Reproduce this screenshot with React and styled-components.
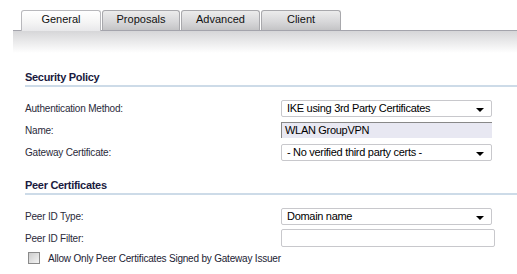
import React from "react";
import styled, { createGlobalStyle } from "styled-components";

const Global = createGlobalStyle`
  html, body { margin: 0; padding: 0; background: #fff; }
  body { width: 517px; height: 274px; overflow: hidden; font-family: "Liberation Sans", Arial, sans-serif; }
`;

const Page = styled.div`
  width: 517px;
  height: 274px;
  background: #fff;
  padding-top: 9px;
  box-sizing: border-box;
`;

const TabBar = styled.div`
  display: flex;
  align-items: flex-end;
  margin-left: 13px;
  padding-left: 8px;
  height: 21px;
  border-bottom: 1px solid #a4a4ac;
`;

const Tab = styled.div`
  width: ${(p) => p.$w}px;
  height: 20px;
  margin-right: 1px;
  box-sizing: border-box;
  border: 1px solid ${(p) => (p.$active ? "#b8b8bc" : "#a8a8ac")};
  border-bottom: none;
  border-radius: 3px 3px 0 0;
  background: ${(p) =>
    p.$active
      ? "linear-gradient(#ffffff, #f4f4f4 60%, #e8e8ea)"
      : "linear-gradient(#ececec, #d6d6d8 60%, #c4c4c6)"};
  font-size: 11px;
  color: #111;
  text-align: center;
  line-height: 17px;
  ${(p) => p.$active && "height: 21px; margin-bottom: -1px;"}
`;

const Band = styled.div`
  margin-left: 13px;
  height: 22px;
  background: linear-gradient(#d6d6d8, #ffffff);
`;

const Content = styled.div`
  padding: 18px 0 0 25px;
  font-size: 10px;
  letter-spacing: -0.2px;
  color: #222233;
`;

const SectionTitle = styled.div`
  font-weight: bold;
  font-size: 11px;
  letter-spacing: -0.3px;
  color: #1a1a40;
  padding-bottom: 2px;
  border-bottom: 2px solid #cddbe8;
  margin-bottom: 10px;
`;

const Row = styled.div`
  display: flex;
  align-items: center;
  height: 22px;
`;

const Label = styled.div`
  width: 256px;
  flex: none;
  color: #2a2a3a;
`;

const SelectBox = styled.div`
  position: relative;
  width: 211px;
  height: 17px;
  box-sizing: border-box;
  border: 1px solid #c8c8cc;
  border-radius: 2px;
  background: #fff;
  font-size: 11px;
  letter-spacing: -0.3px;
  color: #000;
  line-height: 15px;
  padding-left: 5px;
`;

const Arrow = styled.span`
  position: absolute;
  right: 7px;
  top: 7px;
  width: 0;
  height: 0;
  border-left: 4px solid transparent;
  border-right: 4px solid transparent;
  border-top: 4px solid #000;
`;

const NameBox = styled.div`
  width: 211px;
  height: 16px;
  box-sizing: border-box;
  background: #e8e8f2;
  border-top: 1px solid #888;
  border-left: 1px solid #888;
  font-size: 11px;
  letter-spacing: -0.3px;
  color: #000;
  line-height: 15px;
  padding-left: 3px;
`;

const TextInput = styled.div`
  width: 214px;
  height: 18px;
  box-sizing: border-box;
  border: 1px solid #c8c8cc;
  border-radius: 2px;
  background: #fff;
`;

const CheckRow = styled.div`
  display: flex;
  align-items: center;
  margin-left: 3px;
  gap: 8px;
  height: 18px;
`;

const Check = styled.span`
  width: 12px;
  height: 12px;
  box-sizing: border-box;
  border: 1px solid #8a8a8a;
  background: linear-gradient(135deg, #cccccc, #f4f4f4);
`;

const Spacer = styled.div`
  height: 16px;
`;

const Select = ({ children }) => (
  <SelectBox>
    {children}
    <Arrow />
  </SelectBox>
);

export default function App() {
  return (
    <Page>
      <Global />
      <TabBar>
        <Tab $active $w={80}>General</Tab>
        <Tab $w={78}>Proposals</Tab>
        <Tab $w={79}>Advanced</Tab>
        <Tab $w={80}>Client</Tab>
      </TabBar>
      <Band />
      <Content>
        <SectionTitle>Security Policy</SectionTitle>
        <Row>
          <Label>Authentication Method:</Label>
          <Select>IKE using 3rd Party Certificates</Select>
        </Row>
        <Row>
          <Label>Name:</Label>
          <NameBox>WLAN GroupVPN</NameBox>
        </Row>
        <Row>
          <Label>Gateway Certificate:</Label>
          <Select>- No verified third party certs -</Select>
        </Row>
        <Spacer />
        <SectionTitle>Peer Certificates</SectionTitle>
        <Row>
          <Label>Peer ID Type:</Label>
          <Select>Domain name</Select>
        </Row>
        <Row>
          <Label>Peer ID Filter:</Label>
          <TextInput />
        </Row>
        <CheckRow>
          <Check />
          <span>Allow Only Peer Certificates Signed by Gateway Issuer</span>
        </CheckRow>
      </Content>
    </Page>
  );
}
